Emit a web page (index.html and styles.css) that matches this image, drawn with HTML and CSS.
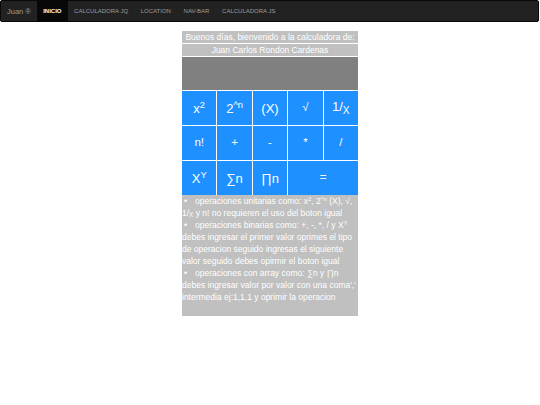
FILE: index.html
```html
<!DOCTYPE html>
<html lang="es">
<head>
<meta charset="utf-8">
<title>Calculadora</title>
<link rel="stylesheet" href="styles.css">
</head>
<body>
<nav class="navbar">
  <a class="brand" href="#">Juan ®</a>
  <ul class="nav-links">
    <li class="active"><a href="#">Inicio</a></li>
    <li><a href="#">Calculadora JQ</a></li>
    <li><a href="#">Location</a></li>
    <li><a href="#">Nav-bar</a></li>
    <li><a href="#">Calculadora JS</a></li>
  </ul>
</nav>
<main class="calc">
  <div class="head">
    <div class="title">Buenos días, bienvenido a la calculadora de:</div>
    <div class="title">Juan Carlos Rondon Cardenas</div>
    <div class="display"></div>
  </div>
  <div class="keys">
    <button class="key big">x<sup>2</sup></button>
    <button class="key big">2<sup>^n</sup></button>
    <button class="key big">(X)</button>
    <button class="key">√</button>
    <button class="key big">1/<sub>X</sub></button>
    <button class="key">n!</button>
    <button class="key">+</button>
    <button class="key">-</button>
    <button class="key">*</button>
    <button class="key">/</button>
    <button class="key big">X<sup>Y</sup></button>
    <button class="key big">∑n</button>
    <button class="key big">∏n</button>
    <button class="key wide">=</button>
  </div>
  <ul class="help">
    <li>operaciones unitarias como: x<sup>2</sup>, 2<sup>^n</sup> (X), √, 1/<sub>X</sub> y n! no requieren el uso del boton igual</li>
    <li>operaciones binarias como: +, -, *, / y X<sup>Y</sup> debes ingresar el primer valor oprimes el tipo de operacion seguido ingresas el siguiente valor seguido debes opirmir el boton igual</li>
    <li>operaciones con array como: ∑n y ∏n debes ingresar valor por valor con una coma',' intermedia ej:1,1,1 y oprimir la operacion</li>
  </ul>
</main>
</body>
</html>
```

FILE: styles.css
```css
* { box-sizing: border-box; }

body {
  margin: 0;
  font-family: "Liberation Sans", Arial, sans-serif;
  background: #fff;
}

.navbar {
  display: flex;
  align-items: stretch;
  height: 22px;
  background: #222;
  border: 1px solid #080808;
  border-radius: 2px;
  margin: 0 1px 9px 0;
}

.brand {
  display: flex;
  align-items: center;
  padding: 0 6px;
  font-size: 7.5px;
  color: #9d9d9d;
  text-decoration: none;
}

.nav-links {
  display: flex;
  margin: 0;
  padding: 0;
  list-style: none;
}

.nav-links li a {
  display: flex;
  align-items: center;
  height: 100%;
  padding: 0 6.3px;
  font-size: 6px;
  text-transform: uppercase;
  color: #9d9d9d;
  text-decoration: none;
}

.nav-links li.active a {
  background: #080808;
  color: #fff;
  font-weight: bold;
}

.calc {
  width: 176px;
  margin: 0 auto;
}

.head {
  display: flex;
  flex-direction: column;
  gap: 1px;
  margin-bottom: 1px;
}

.title {
  height: 12px;
  line-height: 12px;
  background: #c0c0c0;
  color: #fff;
  font-size: 8.5px;
  text-align: center;
  white-space: nowrap;
}

.display {
  height: 33px;
  background: #808080;
}

.keys {
  display: grid;
  grid-template-columns: repeat(5, 1fr);
  grid-auto-rows: 34px;
  gap: 1px;
  background: #fff;
}

.key {
  margin: 0;
  padding: 0;
  border: 0;
  background: #1e90ff;
  color: #fff;
  font-family: "Liberation Sans", Arial, sans-serif;
  font-size: 11.5px;
  line-height: 1;
}

.key.big { font-size: 13px; }

.key sup { font-size: 72%; vertical-align: 0.5em; }
.key sub { font-size: 78%; vertical-align: -0.3em; }

.key.wide { grid-column: span 2; }

.help {
  height: 121px;
  margin: 0;
  padding: 0;
  list-style: none;
  background: #c0c0c0;
  color: #fff;
  font-size: 8.5px;
  line-height: 12px;
}

.help li::before {
  content: "•";
  display: inline-block;
  width: 11px;
  padding-left: 2px;
}

.help sup { font-size: 70%; vertical-align: 0.45em; line-height: 0; }
.help sub { font-size: 75%; vertical-align: -0.2em; line-height: 0; }
```
